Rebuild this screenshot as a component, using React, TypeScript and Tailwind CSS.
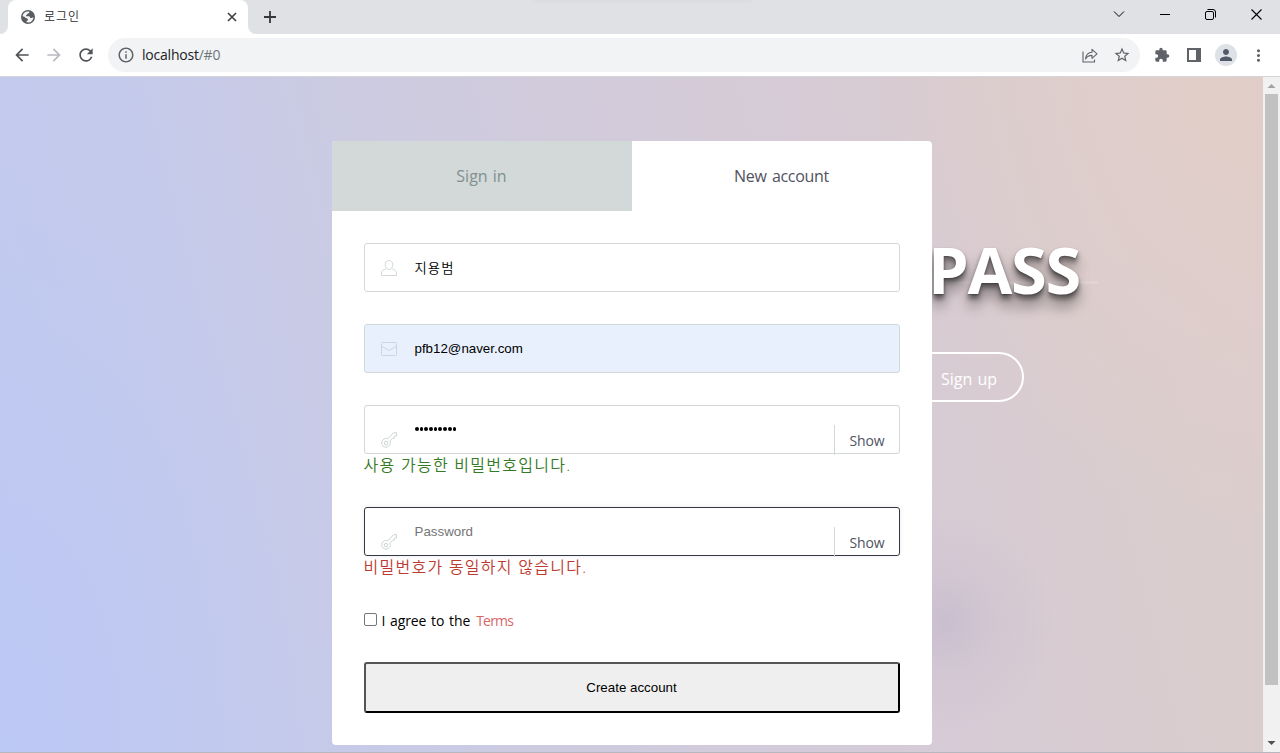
import React from "react";
import { MdArrowBack, MdArrowForward, MdRefresh, MdInfoOutline, MdStarBorder, MdExtension, MdPerson, MdMoreVert } from "react-icons/md";

function TabStrip() {
  return (
    <div className="relative flex h-[34px] shrink-0 items-stretch bg-[#dfe1e5]">
      <div className="absolute left-[534px] top-0 h-[2px] w-[218px] bg-[#d8dade] blur-[1px]" />
      <div className="flex w-2 items-stretch bg-white">
        <div className="w-full rounded-br-lg bg-[#dfe1e5]" />
      </div>
      <div className="flex w-60 items-center rounded-t-lg bg-white pl-[13px] pr-[11px]">
        <svg className="size-[14px]" viewBox="0 0 14 14">
          <circle cx="7" cy="7" r="7" fill="#5a5d61" />
          <path d="M1.600 6.300C1.900 3.600 4.200 1.600 6.800 1.600h1.400c.3 1-.1 1.700-1.100 1.900-.9.2-.8.9-1.300 1.300-.7.500-1 .8-.7 1.500h2.500c1.100 0 1.500.7 1.600 1.600h1.100c.8-.1 1-.6 2.100-.5-.1 2.400-2 4.600-4.400 5-.9.100-1.800 0-2.500-.3l.3-1.400c.9-.2 1.400-.7 1.300-1.400C6.700 8.400 5.400 8.600 4.600 7.900 3.900 7.200 3.200 6.500 1.600 6.300z" fill="#f4f4f4" />
        </svg>
        <span className="ml-[9px] text-[12px] leading-4 tracking-[0.9px] text-[#2b2c2f] [font-weight:350]">로그인</span>
        <svg className="ml-auto size-[10px]" viewBox="0 0 10 10" fill="none" stroke="#3c4043" strokeWidth="1.6">
          <path d="M1 1l8 8M9 1l-8 8" />
        </svg>
      </div>
      <div className="flex w-2 items-stretch bg-white">
        <div className="w-full rounded-bl-lg bg-[#dfe1e5]" />
      </div>
      <svg className="ml-[8px] mt-[11px] size-3" viewBox="0 0 12 12" fill="none" stroke="#35373a" strokeWidth="1.8">
        <path d="M6 0v12M0 6h12" />
      </svg>
      <div className="ml-auto flex items-start pt-[9px] text-black">
        <svg className="mr-[34px] h-[11px] w-[12px]" viewBox="0 0 12 11" fill="none" stroke="currentColor" strokeWidth="1">
          <path d="M1 2.500l5 5 5-5" />
        </svg>
        <svg className="mr-[34px] h-[11px] w-[12px]" viewBox="0 0 12 11" fill="none" stroke="currentColor" strokeWidth="1">
          <path d="M1 5.500h10" />
        </svg>
        <svg className="mr-[35px] h-[11px] w-[11px]" viewBox="0 0 11 11" fill="none" stroke="currentColor" strokeWidth="1">
          <rect x="0.500" y="2.500" width="8" height="8" rx="1.500" />
          <path d="M2.500 0.500H8a2.500 2.500 0 0 1 2.500 2.500v5.500" />
        </svg>
        <svg className="mr-[18px] h-[11px] w-[11px]" viewBox="0 0 11 11" fill="none" stroke="currentColor" strokeWidth="1.100">
          <path d="M0.500 0.500l10 10M10.500 0.500l-10 10" />
        </svg>
      </div>
    </div>
  );
}

function Toolbar() {
  return (
    <div className="flex h-[43px] shrink-0 items-center border-b border-[#d5d5d9] bg-white pl-3 text-[#5f6368]">
      <MdArrowBack className="size-5 text-[#505357]" />
      <MdArrowForward className="ml-3 size-5 text-[#b9bbbe]" />
      <MdRefresh className="ml-3 size-5 text-[#505357]" />
      <div className="ml-3 flex h-[34px] w-[1032px] items-center rounded-full bg-[#f1f3f4] pl-[9px] pr-[9px]">
        <MdInfoOutline className="size-[18px]" />
        <span className="mb-px ml-[7px] font-['Open_Sans','Noto_Sans',sans-serif] text-[14px] tracking-[-0.22px] text-[#202124]">
          localhost<span className="text-[#70757a]">/#0</span>
        </span>
        <svg className="ml-auto h-[15px] w-[16px]" viewBox="0 0 16 15" fill="none" stroke="currentColor" strokeWidth="1.100">
          <path d="M1 3.500V14h11.500v-2.500" />
          <path d="M3.500 11C4 6.500 6.500 4.500 10 4.300V1.300l5 4.500-5 4.500V7.400C7.200 7.400 5 8.500 3.500 11z" strokeLinejoin="round" />
        </svg>
        <MdStarBorder className="ml-[15px] size-[18px]" />
      </div>
      <MdExtension className="ml-[14px] mr-px size-4" />
      <svg className="ml-[16px] h-[14px] w-[14px]" viewBox="0 0 14 14">
        <path d="M0 0h14v14H0zM2 2v10h7V2z" fill="currentColor" fillRule="evenodd" />
      </svg>
      <div className="ml-[14px] flex size-[22px] items-center justify-center rounded-full bg-[#dee1e6]">
        <MdPerson className="size-[18px] text-[#525a69]" />
      </div>
      <MdMoreVert className="ml-[12px] size-[19px]" />
    </div>
  );
}

function UserIcon() {
  return (
    <svg className="size-4" viewBox="0 0 16 16" fill="none" stroke="#d2d8d8" strokeWidth="1">
      <path d="M8 .5c-2.300 0-3.800 1.700-3.800 4.200S5.900 9.500 8 9.500s3.800-2.300 3.800-4.800S10.300.5 8 .5z" />
      <path d="M5.300 8.800C2.300 9.700.5 10.800.5 13v2.500h15V13c0-2.200-1.800-3.300-4.800-4.200" />
    </svg>
  );
}

function MailIcon() {
  return (
    <svg className="size-4" viewBox="0 0 16 16" fill="none" stroke="#ced6dd" strokeWidth="1">
      <rect x="0.500" y="1.500" width="15" height="13" rx="1" />
      <path d="M1 5.500l7 4 7-4" />
    </svg>
  );
}

function KeyIcon() {
  return (
    <svg className="size-4" viewBox="0 0 16 16" fill="none" stroke="#cdd3d3" strokeWidth="1">
      <path d="M12.500.7h3l-.1 3.300-2 .3-.2 1.900-1.900.3-2.400 2.400c.8 1.800.5 3.600-.8 4.900-1.800 1.800-4.500 1.800-6.200.1-1.700-1.700-1.700-4.400.1-6.200 1.300-1.300 3.200-1.700 4.900-.9z" />
      <circle cx="5" cy="11" r="1.800" />
    </svg>
  );
}

function Field({ children, icon, low, className }: { children: React.ReactNode; icon: React.ReactNode; low?: boolean; className: string }) {
  return (
    <div className={"flex h-[49px] items-center rounded-[3px] border pl-4 font-['Liberation_Sans','Noto_Sans_CJK_KR',sans-serif] text-[13.333px] " + className}>
      <div className={low ? "mt-[21px]" : "mt-[1px]"}>{icon}</div>
      <div className="ml-[18px] flex-1">{children}</div>
      {low && (
        <div className="-mb-[21px] flex h-[30px] w-[65px] shrink-0 items-center justify-center border-l border-[#d2d8d8] pl-px font-['Open_Sans','Noto_Sans',sans-serif] text-[14px] text-[#505260] tracking-[-0.1px]">
          Show
        </div>
      )}
    </div>
  );
}

function AccountForm() {
  return (
    <div className="flex h-[604px] w-[600px] flex-col overflow-hidden rounded-[4px] bg-white">
      <div className="flex h-[70px] shrink-0 text-[16px]">
        <div className="flex w-1/2 items-center justify-center bg-[#d3d8d8] text-[#809191]">
          <span className="[word-spacing:1px]">Sign in</span>
        </div>
        <div className="flex w-1/2 items-center justify-center text-[#505260]">
          <span className="tracking-[-0.3px] [word-spacing:1.500px]">New account</span>
        </div>
      </div>
      <div className="flex flex-col px-8 pt-8">
        <Field icon={<UserIcon />} className="border-[#d2d8d8]">
          <span className="relative top-px tracking-[1.100px] text-black [font-weight:350]">지용범</span>
        </Field>
        <Field icon={<MailIcon />} className="mt-8 border-[#d2d8d8] bg-[#e8f0fe]">
          <span className="text-black">pfb12@naver.com</span>
        </Field>
        <Field icon={<KeyIcon />} low className="mt-8 border-[#d2d8d8]">
          <div className="-mt-px flex gap-[1px] pl-[0.500px]">
            {Array.from({ length: 9 }, (_, i) => (
              <span key={i} className="size-[3.700px] rounded-full bg-black" />
            ))}
          </div>
        </Field>
        <p className="h-[21px] text-[16px] leading-[23px] tracking-[1.270px] text-[#357a24] [font-weight:350]">사용 가능한 비밀번호입니다.</p>
        <Field icon={<KeyIcon />} low className="mt-8 border-[#343642] shadow-[0_0_5px_rgba(52,54,66,0.1)]">
          <span className="text-[#757575]">Password</span>
        </Field>
        <p className="h-[21px] text-[16px] leading-[23px] tracking-[1.270px] text-[#bd3a30] [font-weight:350]">비밀번호가 동일하지 않습니다.</p>
        <div className="mt-8 flex h-[24px] items-center pb-px text-[14px]">
          <span className="mb-[2px] size-[13px] rounded-[2px] border border-[#767676] bg-white" />
          <span className="ml-[5px] tracking-[-0.1px] text-black [word-spacing:1.200px]">I agree to the</span>
          <span className="ml-[6px] tracking-[-0.800px] text-[#d76666]">Terms</span>
        </div>
        <button className="mt-[29px] h-[51px] rounded-[3px] border-2 border-b-black border-l-[#555] border-r-black border-t-[#555] bg-[#efefef] font-['Liberation_Sans',sans-serif] text-[13.333px] text-black">
          Create account
        </button>
      </div>
    </div>
  );
}

function Hero() {
  return (
    <div className="absolute inset-y-0 left-[928px] w-[200px] pt-[157px] text-white">
      <div className="absolute left-0 top-[204px] h-[3px] w-[170px] bg-white/15" />
      <h1 className="relative text-[65px] leading-[70px] font-bold tracking-[-1.300px] [text-shadow:0_1px_2px_rgba(0,0,0,0.35),0_5px_5px_rgba(0,0,0,0.45),0_12px_14px_rgba(0,0,0,0.4)]">PASS</h1>
      <div className="-ml-[28px] mt-[48px] flex h-[50px] w-[124px] items-center justify-end rounded-full border-2 border-white pr-[25px] pt-1 text-[16px] [word-spacing:1px]">Sign up</div>
    </div>
  );
}

function Scrollbar() {
  return (
    <div className="flex w-[17px] shrink-0 flex-col items-center bg-[#f1f1f1]">
      <svg className="h-[17px] w-[17px] shrink-0" viewBox="0 0 17 17"><path d="M8.500 7l4 4h-8z" fill="#a3a3a3" /></svg>
      <div className="h-[591px] w-[13px] bg-[#c1c1c1]" />
      <svg className="mt-auto h-[17px] w-[17px] shrink-0" viewBox="0 0 17 17"><path d="M4.500 6h8l-4 4z" fill="#505050" /></svg>
    </div>
  );
}

export default function App() {
  return (
    <div className="flex h-[753px] w-[1280px] flex-col overflow-hidden font-['Open_Sans','Noto_Sans_CJK_KR',sans-serif]">
      <TabStrip />
      <Toolbar />
      <div className="flex min-h-0 flex-1 border-b border-[#b7b8bf]">
        <div className="relative flex flex-1 justify-center overflow-hidden bg-[radial-gradient(circle_at_945px_545px,rgba(185,175,200,0.45),rgba(190,180,200,0.2)_50px,transparent_110px),radial-gradient(ellipse_400px_450px_at_100%_0%,rgba(228,206,198,0.7),transparent),radial-gradient(ellipse_300px_600px_at_0%_100%,rgba(188,200,246,0.8),transparent),linear-gradient(76deg,#c0c9f0_0%,#c4caeb_20%,#cdcbe0_38%,#d2cbdb_52%,#d7cbd4_70%,#dacdce_86%,#dccdcc_100%)]">
          <Hero />
          <div className="relative pt-16">
            <AccountForm />
          </div>
        </div>
        <Scrollbar />
      </div>
    </div>
  );
}
